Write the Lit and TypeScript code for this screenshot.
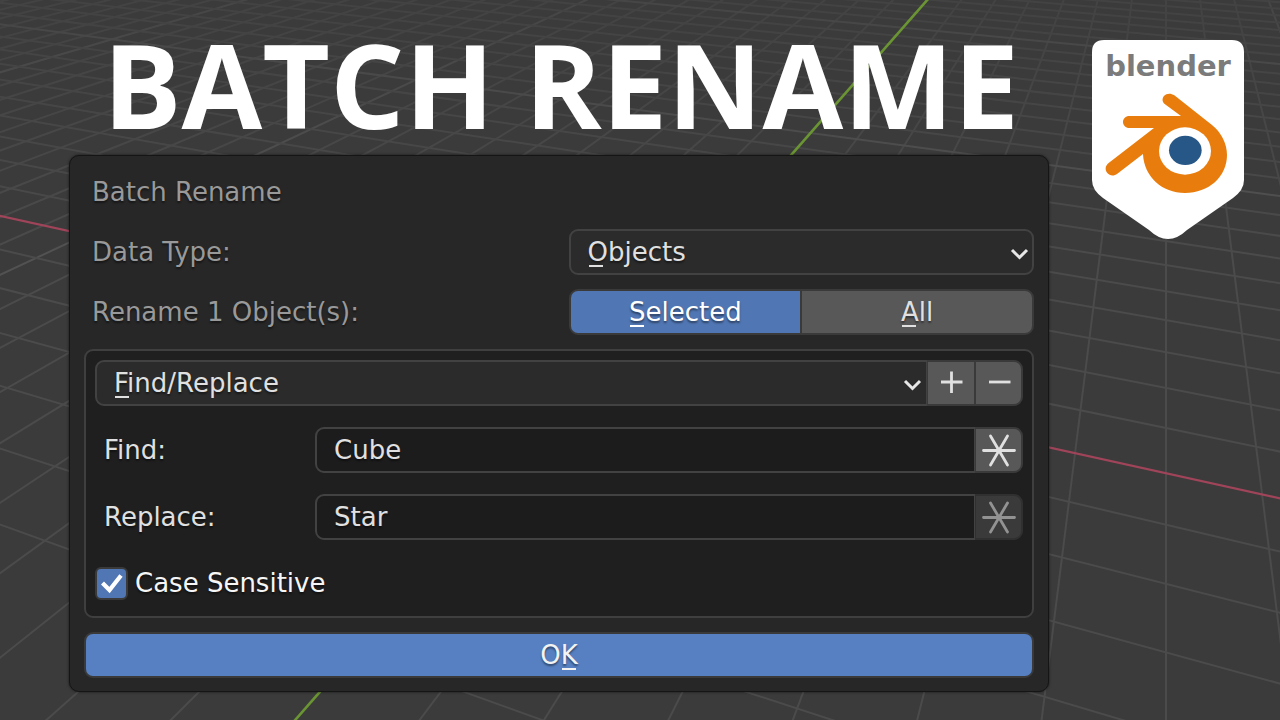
import { LitElement, html, svg, css } from "lit";
import { customElement, state } from "lit/decorators.js";
import { classMap } from "lit/directives/class-map.js";

// Vanishing points of the floor grid share one horizon.
const HORIZON = -272;
const VP_Y_AXIS = 1166;
const VP_X_AXIS = -2209;

@customElement("viewport-grid")
export class ViewportGrid extends LitElement {
  static styles = css`
    :host {
      display: block;
      background: #3b3b3b;
      overflow: hidden;
    }
    svg {
      display: block;
      width: 100%;
      height: 100%;
    }
    line {
      stroke: #4b4b4b;
      stroke-width: 2;
    }
    .major {
      stroke: #525252;
      stroke-width: 2;
    }
    .axis-x {
      stroke: #a0445a;
      stroke-width: 2.2;
    }
    .axis-y {
      stroke: #6b9533;
      stroke-width: 2.6;
    }
  `;

  // Lines parallel to the green axis; index 0 is the axis itself.
  private depthLine(k: number) {
    const foot = VP_Y_AXIS + (k - 7) * 124.4;
    const slope = (foot - VP_Y_AXIS) / (720 - HORIZON);
    const at = (y: number) => VP_Y_AXIS + slope * (y - HORIZON);
    const cls = k === 0 ? "axis-y" : k % 10 === 0 ? "major" : "";
    return svg`<line class=${cls} x1=${at(-40)} y1="-40" x2=${at(760)} y2="760"></line>`;
  }

  // Lines parallel to the red axis; index 0 is the axis itself.
  private crossLine(j: number) {
    const drop = 1 / (0.0013419 - 0.0000867 * j);
    const slope = drop / (VP_Y_AXIS - VP_X_AXIS);
    const at = (x: number) => HORIZON + slope * (x - VP_X_AXIS);
    const cls = j === 0 ? "axis-x" : j % 10 === 0 ? "major" : "";
    return svg`<line class=${cls} x1="-40" y1=${at(-40)} x2="1320" y2=${at(1320)}></line>`;
  }

  private range(from: number, to: number) {
    return Array.from({ length: to - from + 1 }, (_, i) => from + i).filter((n) => n !== 0);
  }

  render() {
    return html`
      <svg viewBox="0 0 1280 720" preserveAspectRatio="xMidYMid slice" aria-hidden="true">
        <defs>
          <linearGradient id="fade" x1="0" y1="0" x2="0" y2="1">
            <stop offset="0" stop-color="#fff" stop-opacity="0.5"></stop>
            <stop offset="0.35" stop-color="#fff" stop-opacity="1"></stop>
          </linearGradient>
          <mask id="distance" maskUnits="userSpaceOnUse" x="0" y="0" width="1280" height="720">
            <rect width="1280" height="720" fill="url(#fade)"></rect>
          </mask>
        </defs>
        <g mask="url(#distance)">
          ${this.range(-32, 14).map((k) => this.depthLine(k))}
          ${this.range(-28, 6).map((j) => this.crossLine(j))}
        </g>
        ${this.crossLine(0)} ${this.depthLine(0)}
      </svg>
    `;
  }
}

@customElement("blender-badge")
export class BlenderBadge extends LitElement {
  static styles = css`
    :host {
      display: block;
    }
    svg {
      display: block;
      width: 100%;
    }
    text {
      font: bold 29px "DejaVu Sans", sans-serif;
      fill: #7b7b7b;
    }
  `;

  render() {
    return html`
      <svg viewBox="0 0 152 199" role="img" aria-label="blender">
        <path
          d="M12 0H140Q152 0 152 12V140Q152 150 141 158L95 190Q76 208 57 190L11 158Q0 150 0 140V12Q0 0 12 0Z"
          fill="#fff"
        ></path>
        <text x="76" y="36" text-anchor="middle">blender</text>
        <g transform="translate(-12 -10) scale(0.33333)">
          <path
            fill="#e87d0d"
            d="M283 196L395 284C424 307 441 340 441 375C441 440 386 489 315 489C246 489 192 440 189 372L112 431C103 438 90 439 82 429C74 419 76 408 85 400L222 294H148C137 294 129 286 129 276C129 266 137 258 148 258H303L255 223C247 217 245 206 252 198C260 189 273 189 283 196Z"
          ></path>
          <ellipse cx="315" cy="363" rx="78" ry="71" fill="#fff"></ellipse>
          <ellipse cx="316" cy="361" rx="49" ry="44" fill="#265787"></ellipse>
        </g>
      </svg>
    `;
  }
}

@customElement("rename-dialog")
export class RenameDialog extends LitElement {
  @state() private scope: "selected" | "all" = "selected";
  @state() private findRegex = true;

  static styles = css`
    :host {
      display: block;
      font: 26px "DejaVu Sans", sans-serif;
      color: #e0e0e0;
    }
    * {
      box-sizing: border-box;
    }
    form {
      display: flex;
      flex-direction: column;
      gap: 14px;
      margin: 0;
      padding: 13px 14px;
      background: #272727;
      border: 1px solid #151515;
      border-radius: 10px;
      box-shadow: 0 0 3px rgba(0, 0, 0, 0.6);
      text-shadow: 0 2px 2px rgba(0, 0, 0, 0.45);
    }
    button,
    input,
    select {
      margin: 0;
      font: inherit;
      color: inherit;
      text-shadow: inherit;
      border: 2px solid #424242;
      border-radius: 9px;
      height: 46px;
      min-width: 0;
    }
    button {
      padding: 0;
      background: #585858;
      border-color: #3a3a3a;
    }
    h2 {
      margin: 0;
      padding-left: 8px;
      font-size: 26px;
      font-weight: normal;
      line-height: 46px;
      color: #999;
    }
    .row {
      display: grid;
      grid-template-columns: 51fr 49fr;
      align-items: center;
    }
    .label {
      padding-left: 8px;
    }
    .dim {
      color: #999;
    }
    .pick {
      display: grid;
      position: relative;
      flex: 1;
    }
    .pick select {
      appearance: none;
      width: 100%;
      padding: 0 40px 0 17px;
      background: #2b2b2b;
    }
    .pick svg {
      position: absolute;
      right: 4px;
      top: 13px;
      pointer-events: none;
    }
    .pick::after {
      content: "";
      position: absolute;
      left: 20px;
      bottom: 8px;
      width: 14px;
      height: 2px;
      background: #e0e0e0;
    }
    .toggle {
      display: grid;
      grid-template-columns: 1fr 1fr;
    }
    .first {
      border-radius: 9px 0 0 9px;
      border-right-width: 1px;
    }
    .last {
      border-radius: 0 9px 9px 0;
      border-left-width: 1px;
    }
    .middle {
      border-radius: 0;
      border-left-width: 1px;
      border-right-width: 1px;
    }
    .on {
      background: #5076b3;
      color: #fff;
    }
    .key {
      position: relative;
    }
    .key::after {
      content: "";
      position: absolute;
      left: 1px;
      bottom: 0;
      width: 14px;
      height: 2px;
      background: currentColor;
    }
    .panel {
      display: flex;
      flex-direction: column;
      gap: 21px;
      padding: 9px 9px 11px;
      background: #1f1f1f;
      border: 2px solid #3f3f3f;
      border-radius: 9px;
    }
    .joined {
      display: flex;
    }
    .icon {
      display: grid;
      place-items: center;
      width: 48px;
      flex: none;
    }
    .off {
      background: #3a3a3a;
      border-color: #303030;
      color: #929292;
    }
    .field {
      display: grid;
      grid-template-columns: 220px 1fr;
      align-items: center;
    }
    .field .label {
      padding-left: 9px;
    }
    .joined input {
      flex: 1;
      padding: 0 17px;
      background: #1c1c1c;
      outline: none;
    }
    .check {
      display: grid;
      grid-template-columns: 33px auto;
      justify-content: start;
      align-items: center;
      column-gap: 7px;
      height: 44px;
      color: #f6f6f6;
    }
    .check input {
      appearance: none;
      grid-area: 1 / 1;
      width: 33px;
      height: 33px;
      border-color: #3a3a3a;
      border-radius: 6px;
      background: #585858;
    }
    .check input:checked {
      background: #5076b3;
    }
    .check svg {
      grid-area: 1 / 1;
      justify-self: center;
      pointer-events: none;
      visibility: hidden;
    }
    .check input:checked + svg {
      visibility: visible;
    }
    .check label {
      grid-column: 2;
    }
    .ok {
      background: #5680c2;
      color: #f2f2f2;
    }
  `;

  private chevron() {
    return html`<svg width="22" height="22" viewBox="0 0 22 22" aria-hidden="true">
      <path d="M4 8L11.500 15.500L19 8" fill="none" stroke="#e6e6e6" stroke-width="3"></path>
    </svg>`;
  }

  private star() {
    return html`<svg width="36" height="36" viewBox="0 0 36 36" aria-hidden="true">
      <path
        d="M2.500 18.500H33.500M9.500 4L26.500 33M26.500 4L9.500 33"
        fill="none"
        stroke="currentColor"
        stroke-width="2.8"
        stroke-linecap="round"
      ></path>
    </svg>`;
  }

  render() {
    return html`
      <form @submit=${(e: Event) => e.preventDefault()}>
        <h2>Batch Rename</h2>

        <div class="row">
          <label class="label dim" for="type">Data Type:</label>
          <div class="pick">
            <select id="type">
              <option>Objects</option>
              <option>Materials</option>
              <option>Bones</option>
            </select>
            ${this.chevron()}
          </div>
        </div>

        <div class="row">
          <span class="label dim" id="scope">Rename 1 Object(s):</span>
          <div class="toggle" role="group" aria-labelledby="scope">
            <button
              type="button"
              class=${classMap({ first: true, on: this.scope === "selected" })}
              @click=${() => (this.scope = "selected")}
            ><span class="key">S</span>elected</button>
            <button
              type="button"
              class=${classMap({ last: true, on: this.scope === "all" })}
              @click=${() => (this.scope = "all")}
            ><span class="key">A</span>ll</button>
          </div>
        </div>

        <div class="panel">
          <div class="joined">
            <div class="pick">
              <select class="first" aria-label="Action">
                <option>Find/Replace</option>
                <option>Set Name</option>
                <option>Strip Characters</option>
              </select>
              ${this.chevron()}
            </div>
            <button type="button" class="icon middle" aria-label="Add action">
              <svg width="24" height="24" viewBox="0 0 24 24" aria-hidden="true">
                <path d="M2 11H23.500M12.500 0.500V22" stroke="currentColor" stroke-width="2.8"></path>
              </svg>
            </button>
            <button type="button" class="icon last" aria-label="Remove action">
              <svg width="24" height="24" viewBox="0 0 24 24" aria-hidden="true">
                <path d="M2 11H23.500" stroke="currentColor" stroke-width="2.8"></path>
              </svg>
            </button>
          </div>

          <div class="field">
            <label class="label" for="find">Find:</label>
            <div class="joined">
              <input class="first" id="find" type="text" value="Cube" />
              <button
                type="button"
                class=${classMap({ icon: true, last: true, off: !this.findRegex })}
                aria-label="Find regular expression"
                @click=${() => (this.findRegex = !this.findRegex)}
              >${this.star()}</button>
            </div>
          </div>

          <div class="field">
            <label class="label" for="replace">Replace:</label>
            <div class="joined">
              <input class="first" id="replace" type="text" value="Star" />
              <button type="button" class="icon last off" aria-label="Replace regular expression">
                ${this.star()}
              </button>
            </div>
          </div>

          <div class="check">
            <input id="case" type="checkbox" checked />
            <svg width="25" height="25" viewBox="0 0 25 25" aria-hidden="true">
              <path d="M3.500 12L10.500 19L22 4.500" fill="none" stroke="#fff" stroke-width="4.200"></path>
            </svg>
            <label for="case">Case Sensitive</label>
          </div>
        </div>

        <button type="submit" class="ok">O<span class="key">K</span></button>
      </form>
    `;
  }
}

@customElement("app-root")
export class AppRoot extends LitElement {
  static styles = css`
    :host {
      display: grid;
      min-height: 100vh;
    }
    viewport-grid {
      grid-area: 1 / 1;
      height: 100%;
      min-height: 0;
      contain: size;
    }
    .page {
      grid-area: 1 / 1;
      z-index: 1;
      display: grid;
      grid-template-columns: minmax(0, 980fr) minmax(0, 152fr);
      grid-template-rows: auto auto;
      align-content: start;
      column-gap: 43px;
      padding: 0 36px 28px 69px;
    }
    h1 {
      margin: 0;
      font: bold 117px "Open Sans", "Noto Sans", sans-serif;
      line-height: 155px;
      height: 155px;
      padding: 6px 0 0 4px;
      box-sizing: border-box;
      color: #fff;
      text-align: center;
      white-space: nowrap;
    }
    blender-badge {
      grid-column: 2;
      grid-row: 1 / span 2;
      padding-top: 40px;
    }
  `;

  render() {
    return html`
      <viewport-grid></viewport-grid>
      <main class="page">
        <h1>BATCH RENAME</h1>
        <rename-dialog></rename-dialog>
        <blender-badge></blender-badge>
      </main>
    `;
  }
}
